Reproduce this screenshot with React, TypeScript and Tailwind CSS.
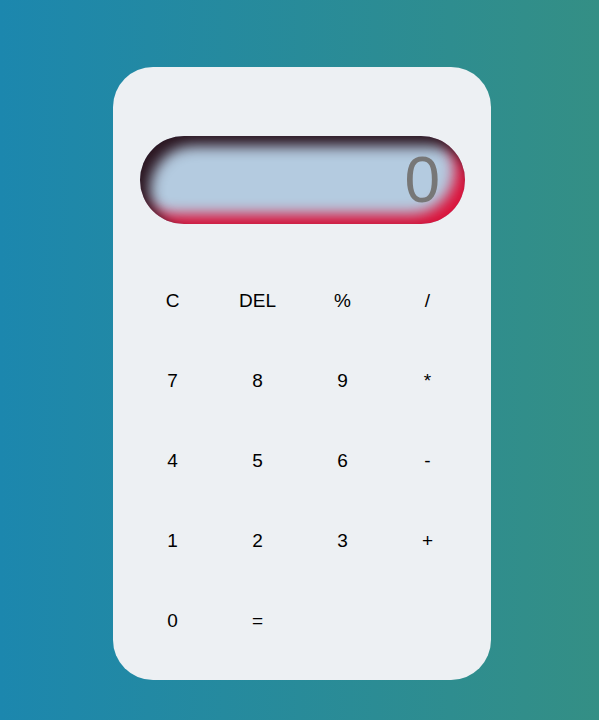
const keys = ['C', 'DEL', '%', '/', '7', '8', '9', '*', '4', '5', '6', '-', '1', '2', '3', '+', '0', '='];

export default function App() {
  return (
    <div
      className="min-h-[720px] w-full bg-[linear-gradient(to_right,#1c87ae,#348f85)] pt-[67px] pl-[113px]"
      style={{ fontFamily: '"Liberation Sans", Arial, sans-serif' }}
    >
      <div className="w-[378px] h-[613px] rounded-[40px] bg-[#edf0f3] pt-[69px] px-[27px]">
        <div className="h-[88px] w-[325px] rounded-full bg-[#b4cbe0] flex items-center justify-end pr-[25px] shadow-[inset_10px_10px_14px_#2a1520,inset_-10px_-10px_14px_#dc143c]">
          <span className="text-[64px] leading-none text-[#777777]">0</span>
        </div>
        <div className="mt-[37px] -ml-[10px] w-[340px] grid grid-cols-4">
          {keys.map((k) => (
            <button
              key={k}
              type="button"
              className="h-[80px] flex items-center justify-center text-[19px] text-black"
            >
              {k}
            </button>
          ))}
        </div>
      </div>
    </div>
  );
}
